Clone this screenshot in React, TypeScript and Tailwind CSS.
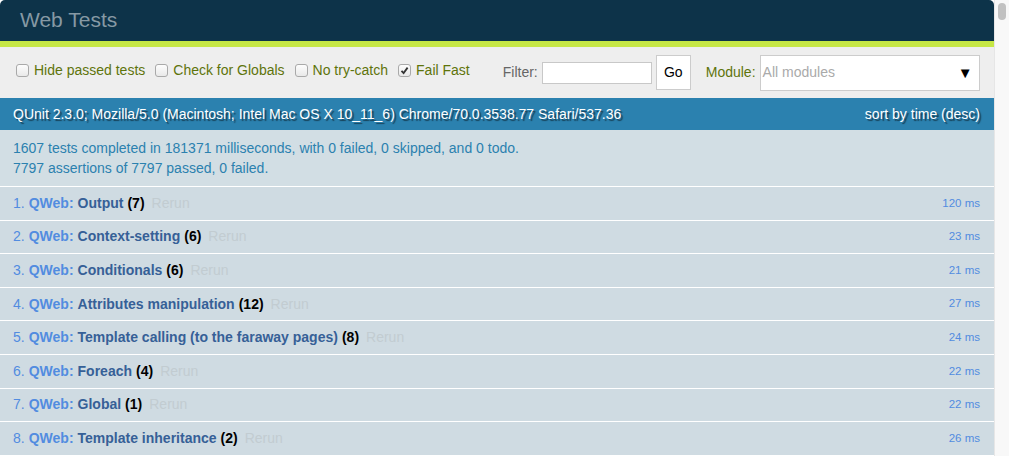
import React from "react";

type TestRow = {
  name: string;
  count: number;
  time: number;
};

const tests: TestRow[] = [
  { name: "Output", count: 7, time: 120 },
  { name: "Context-setting", count: 6, time: 23 },
  { name: "Conditionals", count: 6, time: 21 },
  { name: "Attributes manipulation", count: 12, time: 27 },
  { name: "Template calling (to the faraway pages)", count: 8, time: 24 },
  { name: "Foreach", count: 4, time: 22 },
  { name: "Global", count: 1, time: 22 },
  { name: "Template inheritance", count: 2, time: 26 },
];

const font = { fontFamily: '"Liberation Sans", Arial, sans-serif' };

const Check: React.FC<{ checked?: boolean }> = ({ checked }) => (
  <span className="inline-flex h-[13px] w-[13px] shrink-0 items-center justify-center rounded-[3px] border border-[#a9a9a9] bg-gradient-to-b from-[#fdfdfd] to-[#e9e9e9]">
    {checked && (
      <svg width="9" height="9" viewBox="0 0 9 9">
        <path d="M1.5 4.8 L3.6 7 L7.6 1.6" fill="none" stroke="#333" strokeWidth="1.8" />
      </svg>
    )}
  </span>
);

const Option: React.FC<{ label: string; checked?: boolean }> = ({ label, checked }) => (
  <label className="flex items-center gap-[5px] mr-[10px]">
    <Check checked={checked} />
    <span>{label}</span>
  </label>
);

const App: React.FC = () => {
  return (
    <div className="flex h-[456px] w-[1009px] overflow-hidden bg-white" style={font}>
      <div className="flex w-[994px] flex-col">
        <h1 className="h-[41px] shrink-0 rounded-t-[5px] bg-[#0d3349] pl-[20px] pt-[8px] text-[21px] leading-[24px] text-[#8699a4]">
          Web Tests
        </h1>
        <div className="h-[6px] shrink-0 bg-[#c6e746]" />
        <div className="flex h-[51px] shrink-0 items-center bg-[#eeeeee] pl-[16px] text-[14px] text-[#5e740b]">
          <div className="flex items-center pb-[4px]">
            <Option label="Hide passed tests" />
            <Option label="Check for Globals" />
            <Option label="No try-catch" />
            <Option label="Fail Fast" checked />
          </div>
          <div className="ml-[23px] flex items-center">
            <span className="text-[#666]">Filter:</span>
            <span className="ml-[4px] h-[22px] w-[110px] border border-[#c8c8c8] bg-white" />
            <span className="ml-[4px] flex h-[35px] w-[35px] items-center justify-center border border-[#cccccc] bg-white text-[14px] text-black">
              Go
            </span>
          </div>
          <div className="ml-[15px] flex items-center">
            <span>Module:</span>
            <span className="ml-[4px] flex h-[36px] w-[220px] items-center justify-between border border-[#cccccc] bg-white pl-[2px] pr-[6px]">
              <span className="text-[#aaaaaa]">All modules</span>
              <span className="text-[15px] leading-none text-black">▼</span>
            </span>
          </div>
        </div>
        <div
          className="flex h-[32px] shrink-0 items-center justify-between bg-[#2b81af] px-[13px] text-[14px] text-white"
          style={{ textShadow: "2px 2px 1px rgba(0,0,0,0.5)" }}
        >
          <span>QUnit 2.3.0; Mozilla/5.0 (Macintosh; Intel Mac OS X 10_11_6) Chrome/70.0.3538.77 Safari/537.36</span>
          <span className="pr-[1px]">sort by time (desc)</span>
        </div>
        <div className="h-[57px] shrink-0 border-b border-white bg-[#d2dee4] px-[13px] pt-[8px] text-[14px] leading-[20px] text-[#2b81af]">
          <p>1607 tests completed in 181371 milliseconds, with 0 failed, 0 skipped, and 0 todo.</p>
          <p>7797 assertions of 7797 passed, 0 failed.</p>
        </div>
        <ol className="text-[14px]">
          {tests.map((t, i) => (
            <li
              key={t.name}
              className="flex h-[33.6px] items-center justify-between border-b border-white bg-[#cfdbe2] pl-[13px] pr-[14px]"
            >
              <span className="flex items-center">
                <span className="text-[#528ce0]">{i + 1}.</span>
                <b className="ml-[4px] text-[#528ce0]">QWeb:</b>
                <b className="ml-[4px] text-[#366097]">{t.name}</b>
                <b className="ml-[4px] text-black">({t.count})</b>
                <span className="ml-[7px] text-[#c2ccd1]">Rerun</span>
              </span>
              <span className="text-[11.5px] text-[#528ce0]">{t.time} ms</span>
            </li>
          ))}
        </ol>
      </div>
      <div className="flex w-[15px] shrink-0 justify-center border-l border-[#e6e6e6] bg-[#f8f8f8] pt-[3px]">
        <div className="h-[17px] w-[8px] rounded-full bg-[#c1c1c1]" />
      </div>
    </div>
  );
};

export default App;
